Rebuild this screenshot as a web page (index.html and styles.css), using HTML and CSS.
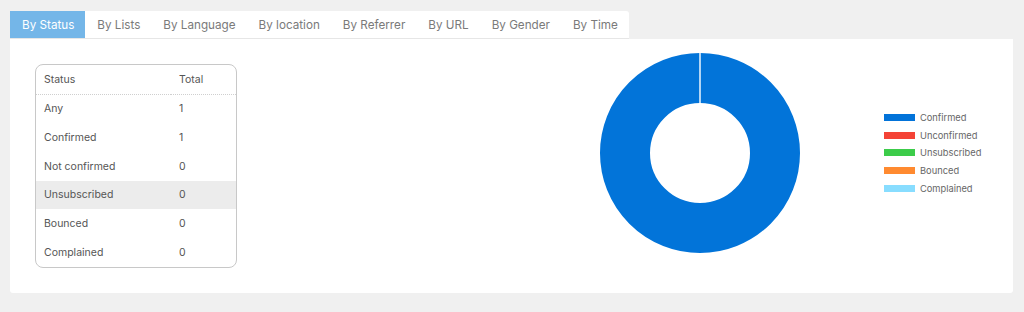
FILE: index.html
```html
<!DOCTYPE html>
<html lang="en">
<head>
    <meta charset="UTF-8">
    <meta name="viewport" content="width=device-width, initial-scale=1.0">
    <title>Subscriber Statistics</title>
    <link rel="stylesheet" href="styles.css">
</head>
<body>
    <!-- Tabs -->
    <div class="tabs">
        <div class="tab active">By Status</div>
        <div class="tab">By Lists</div>
        <div class="tab">By Language</div>
        <div class="tab">By location</div>
        <div class="tab">By Referrer</div>
        <div class="tab">By URL</div>
        <div class="tab">By Gender</div>
        <div class="tab">By Time</div>
    </div>

    <!-- Status panel -->
    <div class="panel">
        <table class="stats">
            <thead>
                <tr><th class="name">Status</th><th>Total</th></tr>
            </thead>
            <tbody>
                <tr><td class="name">Any</td><td>1</td></tr>
                <tr><td class="name">Confirmed</td><td>1</td></tr>
                <tr><td class="name">Not confirmed</td><td>0</td></tr>
                <tr class="hover"><td class="name">Unsubscribed</td><td>0</td></tr>
                <tr><td class="name">Bounced</td><td>0</td></tr>
                <tr><td class="name">Complained</td><td>0</td></tr>
            </tbody>
        </table>

        <svg class="donut" width="200" height="200" viewBox="0 0 200 200">
            <circle cx="100" cy="100" r="75" fill="none" stroke="#0274d9" stroke-width="50"/>
            <line x1="100" y1="0" x2="100" y2="50" stroke="#fff" stroke-width="1.4"/>
        </svg>

        <ul class="legend">
            <li><span class="swatch confirmed"></span>Confirmed</li>
            <li><span class="swatch unconfirmed"></span>Unconfirmed</li>
            <li><span class="swatch unsubscribed"></span>Unsubscribed</li>
            <li><span class="swatch bounced"></span>Bounced</li>
            <li><span class="swatch complained"></span>Complained</li>
        </ul>
    </div>
</body>
</html>
```

FILE: styles.css
```css
body {
    margin: 0;
    padding: 11px 11px 0 10px;
    background-color: #f0f0f0;
    font-family: Inter, "Noto Sans", sans-serif;
    color: #555;
}
.tabs {
    display: inline-flex;
    background-color: #fff;
    border-bottom: 1px solid #e6e6e6;
    border-radius: 0 3px 0 0;
}
.tab {
    padding: 1px 11px 0 12px;
    height: 26px;
    line-height: 27px;
    font-size: 11.7px;
    color: #7a7a7a;
}
.tab.active {
    background-color: #74b6e8;
    color: #fff;
}
.panel {
    display: flex;
    align-items: flex-start;
    height: 240px;
    padding: 14px 0 0 25px;
    background-color: #fff;
    border-radius: 0 0 3px 3px;
}
.stats {
    margin-top: 11px;
    width: 202px;
    border: 1px solid #c8c8c8;
    border-radius: 8px;
    border-collapse: separate;
    border-spacing: 0;
    overflow: hidden;
    font-size: 10.5px;
}
.stats th, .stats td {
    padding: 0 8px;
    height: 28.7px;
    text-align: left;
    font-weight: normal;
}
.stats th {
    height: 28.5px;
    border-bottom: 1px dotted #cfcfcf;
}
.stats .name {
    width: 119px;
}
.stats tr.hover td {
    background-color: #ececec;
}
.donut {
    margin-left: 363px;
}
.legend {
    list-style: none;
    margin: 56px 0 0 84px;
    padding: 0;
    font-size: 9.3px;
    color: #666;
}
.legend li {
    display: flex;
    align-items: center;
    height: 17.6px;
}
.swatch {
    width: 31px;
    height: 7px;
    margin-right: 5px;
}
.confirmed { background-color: #0273d9; }
.unconfirmed { background-color: #f44336; }
.unsubscribed { background-color: #3ccc4a; }
.bounced { background-color: #ff8a30; }
.complained { background-color: #88ddff; }
```
